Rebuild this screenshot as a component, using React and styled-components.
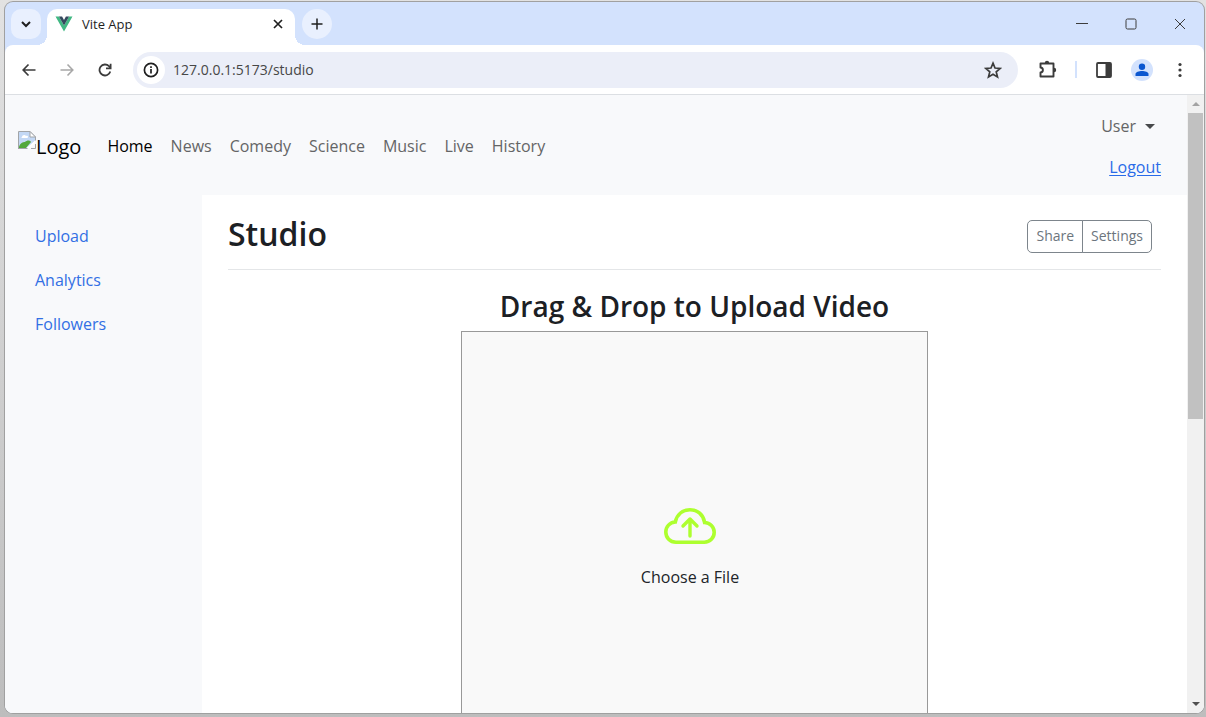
import React from "react";
import styled, { createGlobalStyle, css } from "styled-components";

const GlobalStyle = createGlobalStyle`
  *, *::before, *::after { box-sizing: border-box; }
  body {
    margin: 0;
    background: #c6c6c6;
    color: #212529;
    font-family: "Segoe UI", "Open Sans", "Noto Sans", sans-serif;
    font-size: 16px;
    line-height: 24px;
  }
  button, input { font: inherit; color: inherit; }
  button { border: 0; padding: 0; background: none; cursor: pointer; }
  h1, h2, ul { margin: 0; padding: 0; }
  ul { list-style: none; }
  svg { display: block; flex: none; }
`;

const Desktop = styled.div`
  display: flex;
  height: 100vh;
  padding: 2px 2px 4px 5px;
  background: linear-gradient(#e2e2e2, #bdbdbd);
`;

const Window = styled.div`
  flex: 1;
  min-width: 0;
  display: flex;
  flex-direction: column;
  overflow: hidden;
  border-radius: 8px;
  background: #d3e2fd;
  box-shadow: 0 0 0 1px #a0a0a0;
`;

const TabStrip = styled.div`
  display: flex;
  align-items: center;
  height: 43px;
  padding-left: 6px;
`;

const StripButton = styled.button`
  display: grid;
  place-items: center;
  width: 30px;
  height: 30px;
  border-radius: ${(p) => (p.$round ? "50%" : "10px")};
  background: #e9f0fe;
  color: #1f1f1f;
`;

const Tab = styled.div`
  position: relative;
  align-self: flex-end;
  display: flex;
  align-items: center;
  gap: 9px;
  width: 248px;
  height: 36px;
  margin: 0 7px 0 6px;
  padding: 0 9px 6px 8px;
  border-radius: 10px 10px 0 0;
  background: #fff;

  &::before, &::after {
    content: "";
    position: absolute;
    bottom: 0;
    width: 10px;
    height: 10px;
  }
  &::before {
    right: 100%;
    background: radial-gradient(circle at 0 0, transparent 10px, #fff 10px);
  }
  &::after {
    left: 100%;
    background: radial-gradient(circle at 100% 0, transparent 10px, #fff 10px);
  }
`;

const TabTitle = styled.button`
  flex: 1;
  text-align: left;
  font-size: 13px;
  font-weight: 500;
  line-height: 20px;
  color: #1f1f1f;
`;

const IconButton = styled.button`
  display: grid;
  place-items: center;
  width: ${(p) => p.$size || 24}px;
  height: ${(p) => p.$size || 24}px;
  color: ${(p) => p.$color || "#3c3c3c"};
`;

const WindowControls = styled.div`
  display: flex;
  margin-left: auto;
  padding-right: 12px;
  gap: 24px;
`;

const Toolbar = styled.div`
  display: flex;
  align-items: center;
  height: 50px;
  padding: 0 12px;
  border-bottom: 1px solid #dcdfe3;
  border-radius: 8px 8px 0 0;
  background: #fff;
`;

const NavButtons = styled.div`
  display: flex;
  gap: 14px;
  margin-right: 16px;
`;

const AddressBar = styled.label`
  flex: 1;
  min-width: 0;
  display: flex;
  align-items: center;
  gap: 8px;
  height: 36px;
  padding: 0 13px 0 4px;
  border-radius: 18px;
  background: #ebeef8;
`;

const SiteInfo = styled.button`
  display: grid;
  place-items: center;
  width: 28px;
  height: 28px;
  border-radius: 50%;
  background: #fff;
  color: #1f1f1f;
`;

const Address = styled.input`
  flex: 1;
  min-width: 0;
  padding: 0;
  border: 0;
  outline: 0;
  background: none;
  font-size: 14px;
  line-height: 20px;
  color: #474747;
`;

const Tools = styled.div`
  display: flex;
  align-items: center;
  gap: 15px;
  margin-left: 18px;
`;

const Divider = styled.span`
  width: 2px;
  height: 17px;
  background: #d3e2fd;
`;

const Avatar = styled(IconButton)`
  border-radius: 50%;
  background: #d3e2fd;
  width: 22px;
  height: 22px;
`;

const Viewport = styled.div`
  flex: 1;
  min-height: 0;
  display: flex;
  background: #fff;
`;

const Page = styled.div`
  flex: 1;
  min-width: 0;
  display: flex;
  flex-direction: column;
  overflow: hidden;
`;

const Navbar = styled.header`
  flex: none;
  display: flex;
  align-items: center;
  padding: 9px 26px 8px 13px;
  background: #f8f9fb;
`;

const Brand = styled.a`
  display: flex;
  align-items: flex-start;
  margin-right: 26px;
  padding-top: 3px;
  font-size: 20px;
  line-height: 32px;
  color: #000;
  text-decoration: none;
`;

const NavList = styled.ul`
  display: flex;
  gap: 18px;
`;

const NavLink = styled.a`
  color: ${(p) => (p.$active ? "#000" : "#646566")};
  text-decoration: none;
`;

const Account = styled.div`
  display: flex;
  flex-direction: column;
  align-items: flex-end;
  margin-left: auto;
`;

const UserButton = styled.button`
  display: flex;
  align-items: center;
  gap: 9px;
  height: 44px;
  padding-right: 6px;
  color: #646566;
`;

const Caret = styled.span`
  border: 5px solid transparent;
  border-top-color: #484a4b;
  border-bottom: 0;
`;

const Logout = styled.a`
  line-height: 39px;
  color: #2a6be8;
  text-underline-offset: 2px;
`;

const Columns = styled.div`
  flex: 1;
  display: flex;
`;

const Sidebar = styled.nav`
  flex: none;
  width: 16.667%;
  padding: 19px 13px;
  background: #f8f9fb;
`;

const SideLink = styled.a`
  display: block;
  padding: 10px 17px;
  color: #326fe4;
  text-decoration: none;
`;

const Main = styled.main`
  flex: 1;
  min-width: 0;
  padding: 17px 26px 26px;
`;

const TitleRow = styled.div`
  display: flex;
  align-items: center;
  justify-content: space-between;
  padding: 0 9px 14px 0;
  margin-bottom: 17px;
  border-bottom: 1px solid #e4e6e8;
`;

const Title = styled.h1`
  font-size: 32px;
  line-height: 43px;
  font-weight: 600;
  color: #1c2024;
`;

const ButtonGroup = styled.div`
  display: flex;
  margin-top: 5px;
`;

const GroupButton = styled.button`
  height: 33px;
  padding: 0 8px;
  border: 1px solid #7d858c;
  font-size: 14px;
  color: #6c757d;

  &:first-child { border-radius: 5px 0 0 5px; }
  &:last-child { border-radius: 0 5px 5px 0; margin-left: -1px; }
`;

const DropSection = styled.section`
  width: 50%;
  margin: 0 auto;
`;

const DropTitle = styled.h2`
  margin-bottom: 6px;
  font-size: 28px;
  line-height: 38px;
  font-weight: 600;
  color: #1c2024;
  text-align: center;
  white-space: nowrap;
`;

const DropZone = styled.label`
  display: flex;
  flex-direction: column;
  align-items: center;
  height: 440px;
  padding: 176px 9px 0 0;
  border: 1px solid #999;
  background: #f9f9f9;
  cursor: pointer;
`;

const DropLabel = styled.span`
  margin-top: 21px;
`;

const FileInput = styled.input`
  position: absolute;
  width: 1px;
  height: 1px;
  opacity: 0;
`;

const Scrollbar = styled.div`
  display: flex;
  flex-direction: column;
  align-items: center;
  width: 17px;
  padding: 0 1px;
  background: #f1f1f1;
`;

const Arrow = styled.span`
  display: grid;
  place-items: center;
  width: 15px;
  height: 18px;

  &::before {
    content: "";
    border: 4px solid transparent;
    ${(p) =>
      p.$up
        ? css`border-bottom-color: #a3a3a3; border-top: 0;`
        : css`border-top-color: #505050; border-bottom: 0;`}
  }
`;

const Track = styled.div`
  flex: 1;
  width: 100%;
`;

const Thumb = styled.div`
  height: 52.6%;
  background: #c1c1c1;
`;

const Icon = ({ size = 20, view = 20, width = 2, children }) => (
  <svg width={size} height={size} viewBox={`0 0 ${view} ${view}`} fill="none"
    stroke="currentColor" strokeWidth={width} aria-hidden="true">
    {children}
  </svg>
);

const VueLogo = () => (
  <svg width="18" height="18" viewBox="0 0 18 18" aria-hidden="true">
    <path d="M.5 1.500h3.400L9 10.500l5.100-9h3.400L9 16.500z" fill="#41b883" />
    <path d="M3.900 1.500h3.200L9 4.900l1.900-3.400h3.200L9 10.500z" fill="#35495e" />
  </svg>
);

const BrokenImage = () => (
  <svg width="18" height="18" viewBox="0 0 18 18" aria-hidden="true">
    <path d="M1 1h11l5 5v4l-7 7H1z" fill="#c3d8f5" />
    <path d="M4 6c0-2 3-3 4-1 2-1 3 2 1 2H4.500C3 7 3 6 4 6z" fill="#fff" />
    <path d="M1 16c1-4 4-5 6-5 2-2 5-2 6 0l-5 6H1z" fill="#52a83b" />
    <path d="M0.500 17.500V.5h11.500l5.500 5.500v3.500M0 17.500h9.500M13 17.500h4.500V13" fill="none" stroke="#a2a5a8" />
    <path d="M12 .5V6h5.500z" fill="#fff" stroke="#a2a5a8" />
    <path d="M8.500 17 17 9.500V12l-5 5z" fill="#fff" />
  </svg>
);

const CloudUpload = () => (
  <svg width="52" height="36" viewBox="0 0 52 36" fill="none" stroke="#adff2f" aria-hidden="true">
    <path d="M12 34.200C6 34.200 1.800 29.700 1.800 24c0-5.400 4-9.600 9.500-10C13 6.500 18.600 1.800 26 1.800c7.600 0 13.300 4.900 14.600 12.700 5.400.2 9.600 4.300 9.600 9.700 0 5.700-4.200 10-9.900 10z" strokeWidth="3.600" />
    <path d="M26 28V11M19 18l7-7 7 7" strokeWidth="3.400" strokeLinecap="round" strokeLinejoin="round" />
  </svg>
);

const categories = ["Home", "News", "Comedy", "Science", "Music", "Live", "History"];
const sections = ["Upload", "Analytics", "Followers"];

function BrowserChrome() {
  return (
    <>
      <TabStrip>
        <StripButton aria-label="Search tabs">
          <Icon size={10} view={10}><path d="m1 3 4 4 4-4" /></Icon>
        </StripButton>
        <Tab>
          <VueLogo />
          <TabTitle>Vite App</TabTitle>
          <IconButton $size={16} $color="#1f1f1f" aria-label="Close tab">
            <Icon size={10} view={10} width={1.7}><path d="m1 1 8 8M9 1 1 9" /></Icon>
          </IconButton>
        </Tab>
        <StripButton $round aria-label="New tab">
          <Icon size={12} view={12} width={1.5}><path d="M6 .5v11M.5 6h11" /></Icon>
        </StripButton>
        <WindowControls>
          <IconButton $size={25} aria-label="Minimize">
            <Icon size={12} view={12} width={1}><path d="M0 5.500h12" /></Icon>
          </IconButton>
          <IconButton $size={25} aria-label="Maximize">
            <Icon size={12} view={12} width={1}><rect x="1" y="1" width="10" height="10" rx="1.500" /></Icon>
          </IconButton>
          <IconButton $size={25} aria-label="Close">
            <Icon size={12} view={12} width={1}><path d="m1 1 10 10M11 1 1 11" /></Icon>
          </IconButton>
        </WindowControls>
      </TabStrip>
      <Toolbar>
        <NavButtons>
          <IconButton aria-label="Back">
            <Icon size={14} view={14} width={1.7}><path d="M13.500 7H1.500M6.500 1.500 1.200 7l5.300 5.500" /></Icon>
          </IconButton>
          <IconButton $color="#a8a8a8" aria-label="Forward">
            <Icon size={14} view={14} width={1.600}><path d="M.5 7h12M7.500 1.500 12.800 7l-5.300 5.500" /></Icon>
          </IconButton>
          <IconButton aria-label="Reload">
            <Icon size={14} view={14} width={1.800}>
              <path d="M12.300 8.500A5.500 5.500 0 1 1 11 3.200L12.500 4.800" />
              <path d="M12.600 .8v4.500H8" />
            </Icon>
          </IconButton>
        </NavButtons>
        <AddressBar>
          <SiteInfo aria-label="Site information">
            <Icon size={16} view={16} width={1.700}>
              <circle cx="8" cy="8" r="6.600" />
              <path d="M8 7v4.500M8 4.200v1.800" />
            </Icon>
          </SiteInfo>
          <Address aria-label="Address" defaultValue="127.0.0.1:5173/studio" />
          <IconButton aria-label="Bookmark">
            <Icon size={18} view={18} width={1.700}>
              <path d="m9 2.200 2 4.800 5.200.4-4 3.400 1.300 5.100L9 13.200l-4.500 2.700 1.300-5.100-4-3.400L7 7z" />
            </Icon>
          </IconButton>
        </AddressBar>
        <Tools>
          <IconButton aria-label="Extensions">
            <Icon size={20} view={20} width={1.900}>
              <path d="M2.500 3.500h13v13h-13v-4c3.200-.2 3.200-4.800 0-5z" strokeLinejoin="round" />
              <path d="M6.800 3a2.200 2.200 0 0 1 4.400 0M16 7.800a2.200 2.200 0 0 1 0 4.400" fill="currentColor" stroke="none" />
            </Icon>
          </IconButton>
          <Divider />
          <IconButton aria-label="Side panel">
            <Icon size={16} view={16} width={1.800}>
              <rect x="1" y="1" width="14" height="14" rx="1" />
              <path d="M9.500 1H15v14H9.500z" fill="currentColor" stroke="none" />
            </Icon>
          </IconButton>
          <Avatar $color="#0b57d0" aria-label="Profile">
            <svg width="14" height="14" viewBox="0 0 14 14" fill="currentColor" aria-hidden="true">
              <circle cx="7" cy="3.700" r="3.200" />
              <path d="M.5 13v-2C.5 9 4 8 7 8s6.500 1 6.500 3v2z" />
            </svg>
          </Avatar>
          <IconButton aria-label="Menu">
            <svg width="4" height="16" viewBox="0 0 4 16" fill="currentColor" aria-hidden="true">
              <circle cx="2" cy="2.500" r="1.600" /><circle cx="2" cy="8" r="1.600" /><circle cx="2" cy="13.500" r="1.600" />
            </svg>
          </IconButton>
        </Tools>
      </Toolbar>
    </>
  );
}

export default function App() {
  return (
    <Desktop>
      <GlobalStyle />
      <Window>
        <BrowserChrome />
        <Viewport>
          <Page>
            <Navbar>
              <Brand href="#home"><BrokenImage />Logo</Brand>
              <nav>
                <NavList>
                  {categories.map((name, i) => (
                    <li key={name}><NavLink href={`#${name.toLowerCase()}`} $active={i === 0}>{name}</NavLink></li>
                  ))}
                </NavList>
              </nav>
              <Account>
                <UserButton>User<Caret /></UserButton>
                <Logout href="#logout">Logout</Logout>
              </Account>
            </Navbar>
            <Columns>
              <Sidebar>
                {sections.map((name) => (
                  <SideLink key={name} href={`#${name.toLowerCase()}`}>{name}</SideLink>
                ))}
              </Sidebar>
              <Main>
                <TitleRow>
                  <Title>Studio</Title>
                  <ButtonGroup>
                    <GroupButton>Share</GroupButton>
                    <GroupButton>Settings</GroupButton>
                  </ButtonGroup>
                </TitleRow>
                <DropSection>
                  <DropTitle>Drag &amp; Drop to Upload Video</DropTitle>
                  <DropZone>
                    <FileInput type="file" accept="video/*" />
                    <CloudUpload />
                    <DropLabel>Choose a File</DropLabel>
                  </DropZone>
                </DropSection>
              </Main>
            </Columns>
          </Page>
          <Scrollbar aria-hidden="true">
            <Arrow $up />
            <Track><Thumb /></Track>
            <Arrow />
          </Scrollbar>
        </Viewport>
      </Window>
    </Desktop>
  );
}
